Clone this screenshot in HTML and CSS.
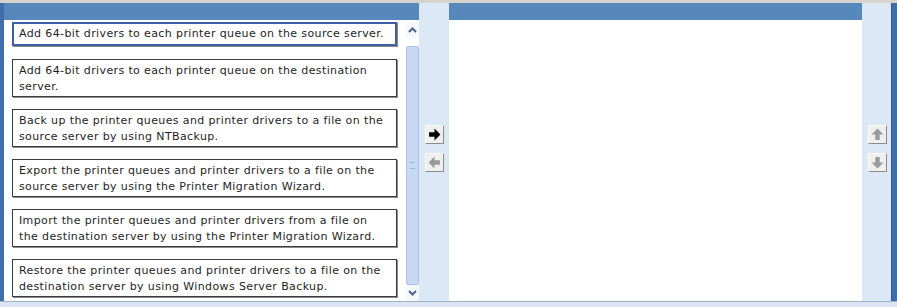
FILE: index.html
```html
<!DOCTYPE html>
<html lang="en">
<head>
    <meta charset="UTF-8">
    <title>Drag and Drop</title>
    <link rel="stylesheet" href="styles.css">
</head>
<body>
    <div class="top-strip"></div>
    <div class="frame">
        <div class="edge-left"></div>
        <div class="pane source">
            <div class="pane-header"></div>
            <div class="pane-body">
                <div class="answer-list">
                    <div class="answer selected">Add 64-bit drivers to each printer queue on the source server.</div>
                    <div class="answer">Add 64-bit drivers to each printer queue on the destination server.</div>
                    <div class="answer">Back up the printer queues and printer drivers to a file on the source server by using NTBackup.</div>
                    <div class="answer">Export the printer queues and printer drivers to a file on the source server by using the Printer Migration Wizard.</div>
                    <div class="answer">Import the printer queues and printer drivers from a file on the destination server by using the Printer Migration Wizard.</div>
                    <div class="answer">Restore the printer queues and printer drivers to a file on the destination server by using Windows Server Backup.</div>
                </div>
                <div class="scrollbar">
                    <div class="scroll-btn">
                        <svg width="9" height="6" viewBox="0 0 9 6"><path d="M1 5l3.5-3.5L8 5" fill="none" stroke="#4d6185" stroke-width="2"/></svg>
                    </div>
                    <div class="scroll-track">
                        <div class="scroll-thumb"><span class="grip"></span></div>
                    </div>
                    <div class="scroll-btn">
                        <svg width="9" height="6" viewBox="0 0 9 6"><path d="M1 1l3.5 3.5L8 1" fill="none" stroke="#4d6185" stroke-width="2"/></svg>
                    </div>
                </div>
            </div>
        </div>
        <div class="side-col">
            <button class="tool-btn" title="Move right">
                <svg width="13" height="13" viewBox="0 0 12 12"><path d="M1 4h5V0.5L11.5 6 6 11.5V8H1z" fill="#000"/></svg>
            </button>
            <button class="tool-btn" title="Move left">
                <svg width="13" height="13" viewBox="0 0 12 12"><path d="M11 4H6V0.5L0.5 6 6 11.5V8h5z" fill="#9a9a9a"/></svg>
            </button>
        </div>
        <div class="pane target">
            <div class="pane-header"></div>
            <div class="pane-body"></div>
        </div>
        <div class="side-col right">
            <button class="tool-btn" title="Move up">
                <svg width="13" height="13" viewBox="0 0 12 12"><path d="M4 11V6H0.5L6 0.5 11.5 6H8v5z" fill="#9a9a9a"/></svg>
            </button>
            <button class="tool-btn" title="Move down">
                <svg width="13" height="13" viewBox="0 0 12 12"><path d="M4 1v5H0.5L6 11.5 11.5 6H8V1z" fill="#9a9a9a"/></svg>
            </button>
        </div>
        <div class="edge-right"></div>
    </div>
    <div class="bottom-strip"></div>
</body>
</html>
```

FILE: styles.css
```css
body {
    margin: 0;
    font-family: "DejaVu Sans", Verdana, sans-serif;
    background-color: #dfe8f3;
    width: 897px;
    height: 307px;
    overflow: hidden;
}
.top-strip {
    height: 3px;
    background: #d6d3cc;
}
.frame {
    display: flex;
    height: 298px;
}
.edge-left {
    width: 4px;
    background: #3f6fa8;
}
.edge-right {
    width: 6px;
    background: #3f6fa8;
    border-left: 1px solid #2f5b92;
    box-sizing: border-box;
}
.pane {
    display: flex;
    flex-direction: column;
    background: #fff;
}
.pane.source {
    width: 415px;
}
.pane.target {
    width: 413px;
}
.pane-header {
    height: 17px;
    background: #5688bb;
    flex-shrink: 0;
}
.pane-body {
    flex: 1;
    display: flex;
}
.answer-list {
    flex: 1;
    display: flex;
    flex-direction: column;
    gap: 12px;
    padding: 2px 0 0 8px;
}
.answer {
    width: 385px;
    min-height: 38px;
    box-sizing: border-box;
    border: 1px solid #3c3c3c;
    box-shadow: 1px 1px 0 #8a8a8a;
    padding: 3px 6px 0 6px;
    font-size: 11px;
    letter-spacing: 0.38px;
    line-height: 16px;
    color: #1e1e1e;
    background: #fff;
}
.answer.selected {
    min-height: 24px;
    border: 2px solid #3d5fa5;
    padding: 2px 5px 0 5px;
    margin-bottom: 1px;
}
.scrollbar {
    width: 13px;
    display: flex;
    flex-direction: column;
    padding-top: 2px;
}
.scroll-btn {
    height: 16px;
    display: flex;
    align-items: center;
    justify-content: center;
    background: #f4f7fc;
}
.scroll-track {
    flex: 1;
    padding: 8px 0 0 0;
    display: flex;
}
.scroll-thumb {
    flex: 1;
    background: #c7d8f2;
    border: 1px solid #a9c2e9;
    border-radius: 2px;
    display: flex;
    align-items: center;
    justify-content: center;
}
.grip {
    width: 5px;
    height: 5px;
    border-top: 1px solid #9ab3db;
    border-bottom: 1px solid #9ab3db;
}
.side-col {
    width: 30px;
    background: #dce8f5;
    display: flex;
    flex-direction: column;
    align-items: center;
    justify-content: center;
    gap: 9px;
    padding-bottom: 8px;
    box-sizing: border-box;
}
.side-col.right {
    width: 29px;
    padding-left: 2px;
}
.tool-btn {
    width: 19px;
    height: 19px;
    padding: 0;
    background: #efefef;
    border: 1px solid;
    border-color: #fff #8c8c8c #8c8c8c #fff;
    display: flex;
    align-items: center;
    justify-content: center;
    cursor: pointer;
}
.bottom-strip {
    height: 6px;
    border-top: 1px solid #9fb1c7;
    background: #dbe5f1;
}
```
